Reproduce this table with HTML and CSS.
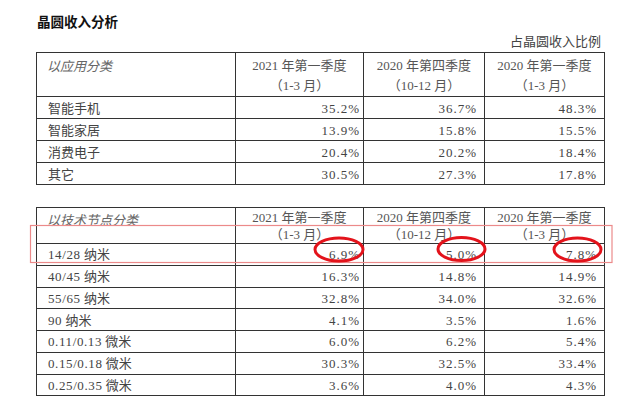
FILE: index.html
```html
<!DOCTYPE html>
<html lang="zh-CN">
<head>
<meta charset="utf-8">
<title>晶圆收入分析</title>
<link rel="stylesheet" href="styles.css">
</head>
<body>
<div class="page">
  <h1 class="title">晶圆收入分析</h1>
  <div class="caption">占晶圆收入比例</div>

  <table class="data t1">
    <colgroup><col class="c1"><col class="c2"><col class="c3"><col class="c4"></colgroup>
    <thead>
      <tr class="head">
        <th class="cat">以应用分类</th>
        <th><span class="l">2021 年第一季度</span><span class="l">（1-3 月）</span></th>
        <th><span class="l">2020 年第四季度</span><span class="l">（10-12 月）</span></th>
        <th><span class="l">2020 年第一季度</span><span class="l">（1-3 月）</span></th>
      </tr>
    </thead>
    <tbody>
      <tr><td class="name">智能手机</td><td class="num">35.2%</td><td class="num">36.7%</td><td class="num">48.3%</td></tr>
      <tr><td class="name">智能家居</td><td class="num">13.9%</td><td class="num">15.8%</td><td class="num">15.5%</td></tr>
      <tr><td class="name">消费电子</td><td class="num">20.4%</td><td class="num">20.2%</td><td class="num">18.4%</td></tr>
      <tr><td class="name">其它</td><td class="num">30.5%</td><td class="num">27.3%</td><td class="num">17.8%</td></tr>
    </tbody>
  </table>

  <table class="data t2">
    <colgroup><col class="c1"><col class="c2"><col class="c3"><col class="c4"></colgroup>
    <thead>
      <tr class="head">
        <th class="cat">以技术节点分类</th>
        <th><span class="l">2021 年第一季度</span><span class="l">（1-3 月）</span></th>
        <th><span class="l">2020 年第四季度</span><span class="l">（10-12 月）</span></th>
        <th><span class="l">2020 年第一季度</span><span class="l">（1-3 月）</span></th>
      </tr>
    </thead>
    <tbody>
      <tr><td class="name"><span class="n">14/28</span> 纳米</td><td class="num">6.9%</td><td class="num">5.0%</td><td class="num">7.8%</td></tr>
      <tr><td class="name"><span class="n">40/45</span> 纳米</td><td class="num">16.3%</td><td class="num">14.8%</td><td class="num">14.9%</td></tr>
      <tr><td class="name"><span class="n">55/65</span> 纳米</td><td class="num">32.8%</td><td class="num">34.0%</td><td class="num">32.6%</td></tr>
      <tr><td class="name"><span class="n">90</span> 纳米</td><td class="num">4.1%</td><td class="num">3.5%</td><td class="num">1.6%</td></tr>
      <tr><td class="name"><span class="n">0.11/0.13</span> 微米</td><td class="num">6.0%</td><td class="num">6.2%</td><td class="num">5.4%</td></tr>
      <tr><td class="name"><span class="n">0.15/0.18</span> 微米</td><td class="num">30.3%</td><td class="num">32.5%</td><td class="num">33.4%</td></tr>
      <tr><td class="name"><span class="n">0.25/0.35</span> 微米</td><td class="num">3.6%</td><td class="num">4.0%</td><td class="num">4.3%</td></tr>
    </tbody>
  </table>

  <svg class="marks" width="640" height="414" viewBox="0 0 640 414" aria-hidden="true">
    <rect class="box" x="30.5" y="225.5" width="581.5" height="37"/>
    <ellipse class="ring" cx="339" cy="249.5" rx="24" ry="11.5"/>
    <ellipse class="ring" cx="461.5" cy="249" rx="23.5" ry="11.5"/>
    <ellipse class="ring" cx="577.5" cy="249.5" rx="23.5" ry="11.5"/>
  </svg>
</div>
</body>
</html>
```

FILE: styles.css
```css
html, body {
  margin: 0;
  padding: 0;
  background: #ffffff;
}

.page {
  position: relative;
  width: 640px;
  height: 414px;
  box-sizing: border-box;
  padding: 13px 36px 0 36px;
  font-family: "Liberation Serif", "Noto Sans CJK SC", serif;
  color: #444;
  overflow: hidden;
}

.title {
  margin: 0 0 0 1px;
  font-size: 13.5px;
  line-height: 16px;
  font-weight: 700;
  color: #111;
  font-family: "Noto Sans CJK SC", sans-serif;
}

.caption {
  margin-top: 4px;
  text-align: right;
  padding-right: 3px;
  font-size: 13px;
  line-height: 16px;
  color: #444;
  font-family: "Noto Sans CJK SC", sans-serif;
}

.data {
  border-collapse: collapse;
  table-layout: fixed;
  width: 568px;
  border: 1.5px solid #333;
  font-size: 13px;
}

.t1 { margin-top: 3px; }
.t2 { margin-top: 22px; }

.c1 { width: 199px; }
.c2 { width: 128px; }
.c3 { width: 121px; }
.c4 { width: 120px; }

.data th,
.data td {
  border: 1.5px solid #333;
  padding: 0;
  overflow: hidden;
  white-space: nowrap;
}

.data th {
  font-weight: 400;
  vertical-align: top;
  text-align: center;
  color: #555;
}

.t1 .head { height: 40px; }
.t2 .head { height: 36px; }

.t1 th { padding-top: 3px; }
.t2 th { padding-top: 2px; }

.l {
  display: block;
  line-height: 20px;
}
.t2 .l { line-height: 16.5px; }

.data th.cat {
  text-align: left;
  padding-left: 10px;
  font-style: italic;
  color: #666;
}

.t1 tbody tr { height: 22px; }
.t2 tbody tr { height: 21.75px; }

.data td {
  vertical-align: middle;
  padding-top: 2px;
  line-height: 18px;
}

.name {
  padding-left: 11px !important;
  color: #444;
}

.n {
  letter-spacing: 0.6px;
}

.num {
  text-align: right;
  padding-right: 7px !important;
  letter-spacing: 1px;
  color: #444;
}

.t1 td:nth-child(2).num,
.t2 td:nth-child(2).num {
  padding-right: 3px !important;
}

.marks {
  position: absolute;
  left: 0;
  top: 0;
  pointer-events: none;
}

.box {
  fill: none;
  stroke: #ec8a8a;
  stroke-width: 1.2;
}

.ring {
  fill: none;
  stroke: #e3131b;
  stroke-width: 3;
}
```
